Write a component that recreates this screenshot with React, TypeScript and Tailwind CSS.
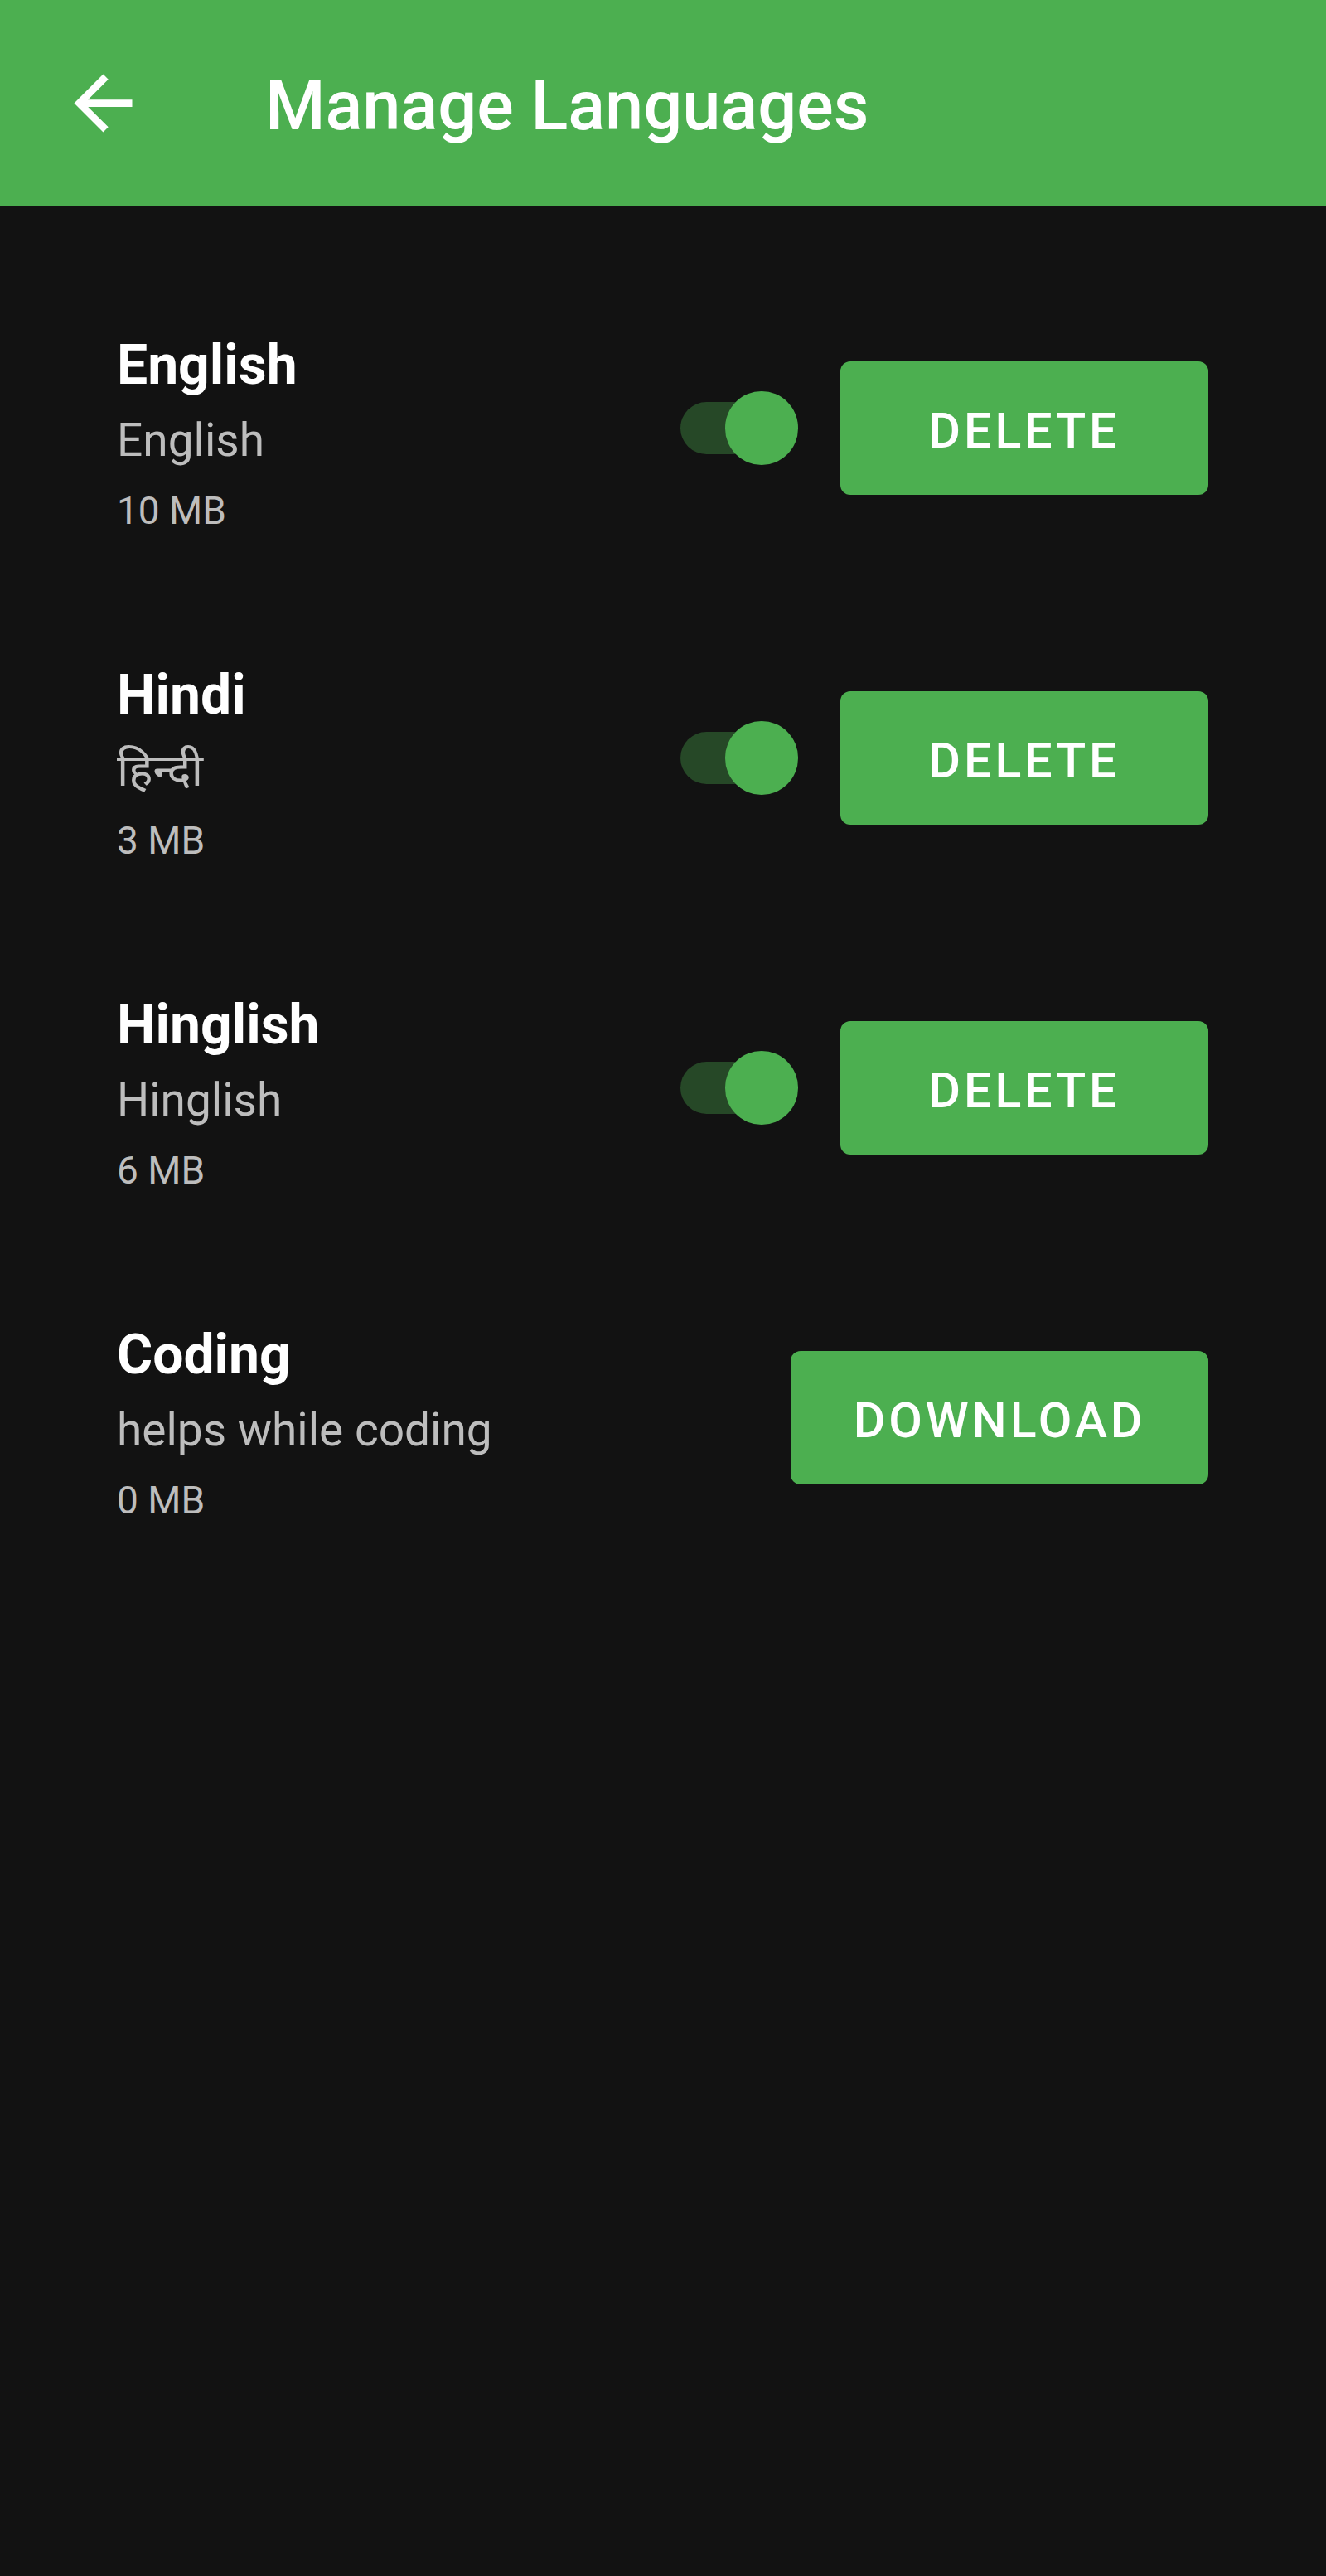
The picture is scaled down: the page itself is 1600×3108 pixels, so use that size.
import React from 'react';

// Manage Languages screen: green app bar over a dark list of language packs.
type Lang = {
  name: string;
  native: string;
  size: string;
  installed: boolean;
};

const languages: Lang[] = [
  { name: 'English', native: 'English', size: '10 MB', installed: true },
  { name: 'Hindi', native: 'हिन्दी', size: '3 MB', installed: true },
  { name: 'Hinglish', native: 'Hinglish', size: '6 MB', installed: true },
  { name: 'Coding', native: 'helps while coding', size: '0 MB', installed: false },
];

const font = { fontFamily: 'Roboto, "Noto Sans", "Noto Sans CJK SC", sans-serif' };

function BackArrow() {
  return (
    <svg viewBox="0 0 24 24" className="h-[105px] w-[105px] fill-white">
      <path d="M20 11H7.83l5.59-5.59L12 4l-8 8 8 8 1.41-1.41L7.83 13H20v-2z" />
    </svg>
  );
}

function Toggle() {
  return (
    <div className="relative h-[89px] w-[142px] shrink-0">
      <div className="absolute left-0 top-[13px] h-[63px] w-[136px] rounded-full bg-[#264827]" />
      <div className="absolute right-0 top-0 h-[89px] w-[88px] rounded-full bg-[#4caf50]" />
    </div>
  );
}

function Row({ lang }: { lang: Lang }) {
  return (
    <div className="flex h-[398px] items-center pl-[141px] pr-[142px]">
      <div className="flex-1 pt-[24px]">
        <div className="text-[66px] font-bold leading-[87px] text-white">{lang.name}</div>
        <div className="mt-[4px] text-[55px] leading-[87px] text-[#bdbdbd]">{lang.native}</div>
        <div className="mt-[-2px] text-[46px] leading-[87px] text-[#bdbdbd]">{lang.size}</div>
      </div>
      {lang.installed && (
        <div className="mr-[51px]">
          <Toggle />
        </div>
      )}
      <button
        className={
          'flex h-[161px] items-center justify-center rounded-[12px] bg-[#4caf50] pt-[8px] text-[59px] font-medium tracking-[4px] text-white ' +
          (lang.installed ? 'w-[444px]' : 'w-[504px]')
        }
      >
        {lang.installed ? 'DELETE' : 'DOWNLOAD'}
      </button>
    </div>
  );
}

export default function App() {
  return (
    <div className="min-h-[3108px] w-[1600px] bg-[#121212]" style={font}>
      <header className="flex h-[248px] items-center bg-[#4caf50] pl-[72px]">
        <BackArrow />
        <h1 className="ml-[143px] mt-[9px] text-[83px] font-medium text-white">Manage Languages</h1>
      </header>
      <div className="pt-[69px]">
        {languages.map((l) => (
          <Row key={l.name} lang={l} />
        ))}
      </div>
    </div>
  );
}
